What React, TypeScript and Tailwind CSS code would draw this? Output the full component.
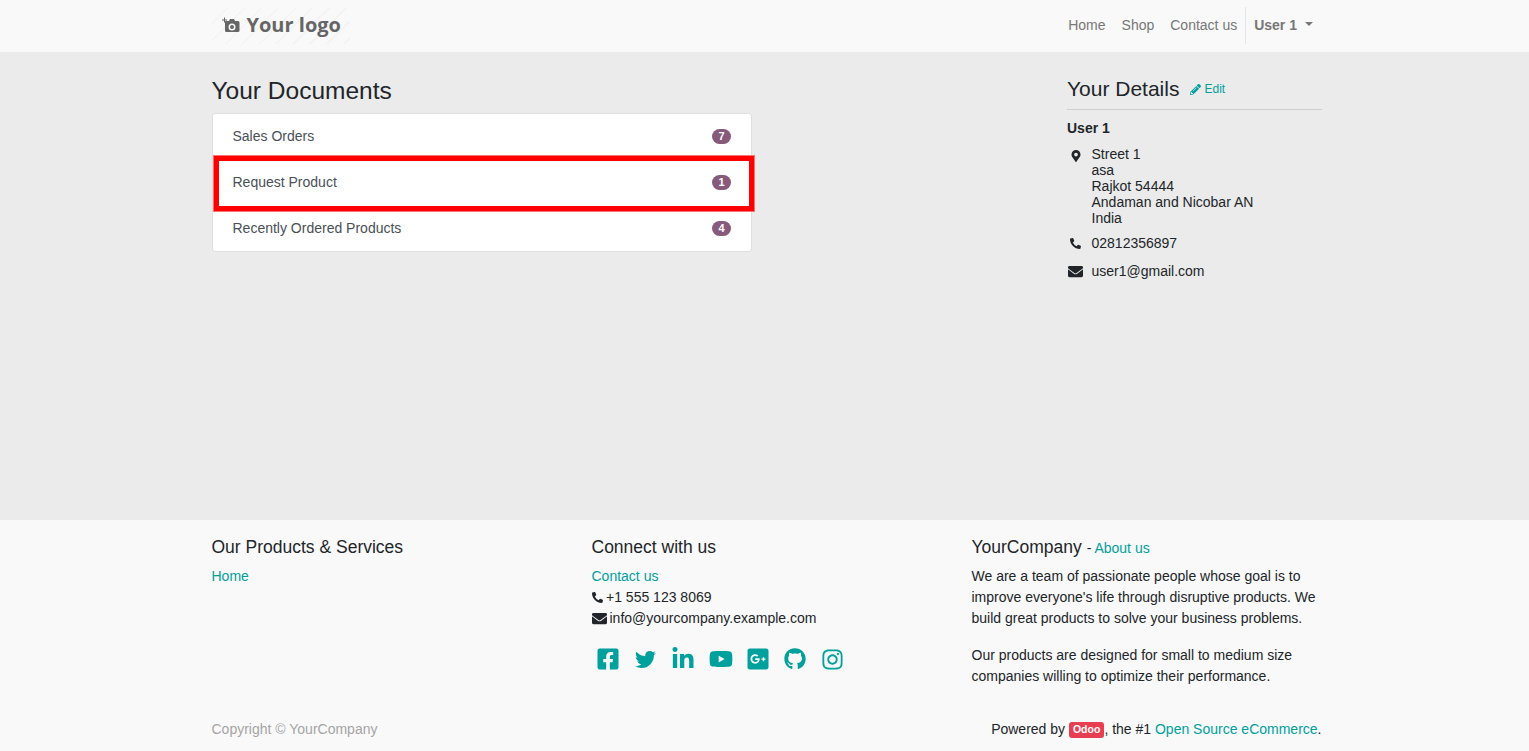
import React from "react";
import { FaFacebookSquare, FaTwitter, FaLinkedinIn, FaYoutube, FaGooglePlusSquare, FaGithub, FaInstagram, FaPencilAlt, FaMapMarkerAlt, FaPhoneAlt, FaEnvelope } from "react-icons/fa";

const Row = ({ label, n, mark }: { label: string; n: number; mark?: boolean }) => (
  <div className="relative flex h-[46px] items-center justify-between pb-[2px] pl-5 pr-5 text-[14px] text-[#495057]">
    <span>{label}</span>
    <span className="flex h-[15px] w-[19px] items-center justify-center rounded-full bg-[#875a7b] text-[11px] font-bold text-white">{n}</span>
    {mark && <div className="absolute left-[1px] -right-[3px] -top-[4px] -bottom-[5px] border-[5px] border-[#ff0000] outline outline-[#ff7070]" />}
  </div>
);

const Social = ({ children }: { children: React.ReactNode }) => (
  <div className="flex w-[37.4px] justify-center">{children}</div>
);

export default function App() {
  return (
    <div className="flex min-h-[751px] flex-col bg-[#ebebeb] font-['Liberation_Sans',Arial,sans-serif] text-[14px] text-[#212529]">
      <header className="h-[52px] bg-[#f9f9f9]">
        <div className="ml-[211.5px] flex h-full w-[1110.5px] items-center justify-between">
          <div className="flex h-[36px] w-[138px] items-center gap-[6px] bg-[repeating-linear-gradient(135deg,#f9f9f9_0px,#f9f9f9_10px,#f4f4f4_10px,#f4f4f4_12px)] pb-[2px] pl-[10px] text-[#666666]">
            <svg width="19" height="17" viewBox="0 0 19 17" fill="currentColor">
              <path d="M2 0.500h1v2h2v1H3v2H2v-2H0v-1h2z" />
              <path fillRule="evenodd" d="M4 4h3l1-2h4l1 2h3a1.500 1.500 0 0 1 1.500 1.500v8A1.500 1.500 0 0 1 16 15H4.500A1.500 1.500 0 0 1 3 13.500V5.500A1 1 0 0 1 4 4zm6 2.500a3.500 3.500 0 1 0 0 7 3.500 3.500 0 0 0 0-7zm0 1.500a2 2 0 1 1 0 4 2 2 0 0 1 0-4z" />
            </svg>
            <span className="font-['Open_Sans',sans-serif] text-[20px] font-bold leading-[24px]">Your logo</span>
          </div>
          <nav className="flex h-full items-center pb-[2px] pr-[1px] text-[#777777]">
            <span className="mr-4">Home</span>
            <span className="mr-4">Shop</span>
            <span className="mr-2">Contact us</span>
            <div className="flex h-[37px] items-center border-l border-[#e3e5e7] pl-2 pr-2 font-bold">
              User 1
              <span className="ml-[8px] mb-[2px] h-0 w-0 border-x-[4.500px] border-t-[4.500px] border-x-transparent border-t-[#777777]" />
            </div>
          </nav>
        </div>
      </header>

      <main className="h-[468px]">
        <div className="ml-[211.5px] flex w-[1110.5px] justify-between">
          <div className="w-[540.5px]">
            <h2 className="mt-[22px] mb-[6px] text-[24.500px] leading-[33px]">Your Documents</h2>
            <div className="h-[139px] rounded-[3px] border border-[#dfdfdf] bg-white">
              <Row label="Sales Orders" n={7} />
              <Row label="Request Product" n={1} mark />
              <Row label="Recently Ordered Products" n={4} />
            </div>
          </div>
          <aside className="w-[255px]">
            <div className="mt-[23px] flex h-[35px] items-start border-b border-[#cfcfcf]">
              <h3 className="text-[21px] leading-[27px]">Your Details</h3>
              <span className="ml-[11px] mt-[7px] flex items-center gap-[3px] text-[12px] leading-[15px] text-[#00a09d]">
                <FaPencilAlt size={11} />Edit
              </span>
            </div>
            <div className="mt-[10px] font-bold leading-[17px]">User 1</div>
            <div className="mt-[9px] flex">
              <div className="w-[24.5px] pl-[2.5px] pt-[4px]"><FaMapMarkerAlt size={12} /></div>
              <div className="leading-[16px]">Street 1<br />asa<br />Rajkot 54444<br />Andaman and Nicobar AN<br />India</div>
            </div>
            <div className="mt-[9px] flex h-[16px] items-center">
              <div className="w-[24.5px] pl-[3px]"><FaPhoneAlt size={11} /></div>02812356897
            </div>
            <div className="mt-[12px] flex h-[16px] items-center">
              <div className="w-[24.5px] pl-[1px]"><FaEnvelope size={15} /></div>user1@gmail.com
            </div>
          </aside>
        </div>
      </main>

      <footer className="h-[231px] bg-[#f9f9f9]">
        <div className="ml-[211.5px] grid w-[1140px] grid-cols-[380px_380px_350.5px] pt-[15px] leading-[21px]">
          <div>
            <h5 className="text-[17.5px] leading-[24px]">Our Products &amp; Services</h5>
            <div className="mt-[7px] text-[#00a09d]">Home</div>
          </div>
          <div>
            <h5 className="text-[17.5px] leading-[24px]">Connect with us</h5>
            <div className="mt-[7px] text-[#00a09d]">Contact us</div>
            <div className="flex items-center gap-[3.5px]"><FaPhoneAlt size={11} />+1 555 123 8069</div>
            <div className="flex items-center gap-[3px]"><FaEnvelope size={15} />info@yourcompany.example.com</div>
            <div className="mt-[18px] -ml-[2px] flex h-[24px] items-center text-[#00a09d]">
              <Social><FaFacebookSquare size={24} /></Social>
              <Social><FaTwitter size={21} /></Social>
              <Social><FaLinkedinIn size={24} /></Social>
              <Social><FaYoutube size={24} className="ml-[1px]" /></Social>
              <Social><FaGooglePlusSquare size={24} className="ml-[1px]" /></Social>
              <Social><FaGithub size={22} /></Social>
              <Social><FaInstagram size={23} /></Social>
            </div>
          </div>
          <div>
            <h5 className="text-[17.5px] leading-[24px]">YourCompany <span className="text-[14px]">- <span className="text-[#00a09d]">About us</span></span></h5>
            <p className="mt-[6px]">We are a team of passionate people whose goal is to improve everyone's life through disruptive products. We build great products to solve your business problems.</p>
            <p className="mt-[16px]">Our products are designed for small to medium size companies willing to optimize their performance.</p>
          </div>
        </div>
        <div className="ml-[211.5px] mt-[32px] flex w-[1110.5px] items-center justify-between">
          <span className="text-[#a5a5a5]">Copyright © YourCompany</span>
          <span className="mr-[0.5px] flex items-center whitespace-pre">Powered by <span className="flex h-[16px] items-center rounded-[3px] bg-[#e83e52] px-[4px] text-[10.500px] font-bold text-white">Odoo</span>, the #1 <span className="text-[#00a09d]">Open Source eCommerce</span>.</span>
        </div>
      </footer>
    </div>
  );
}
